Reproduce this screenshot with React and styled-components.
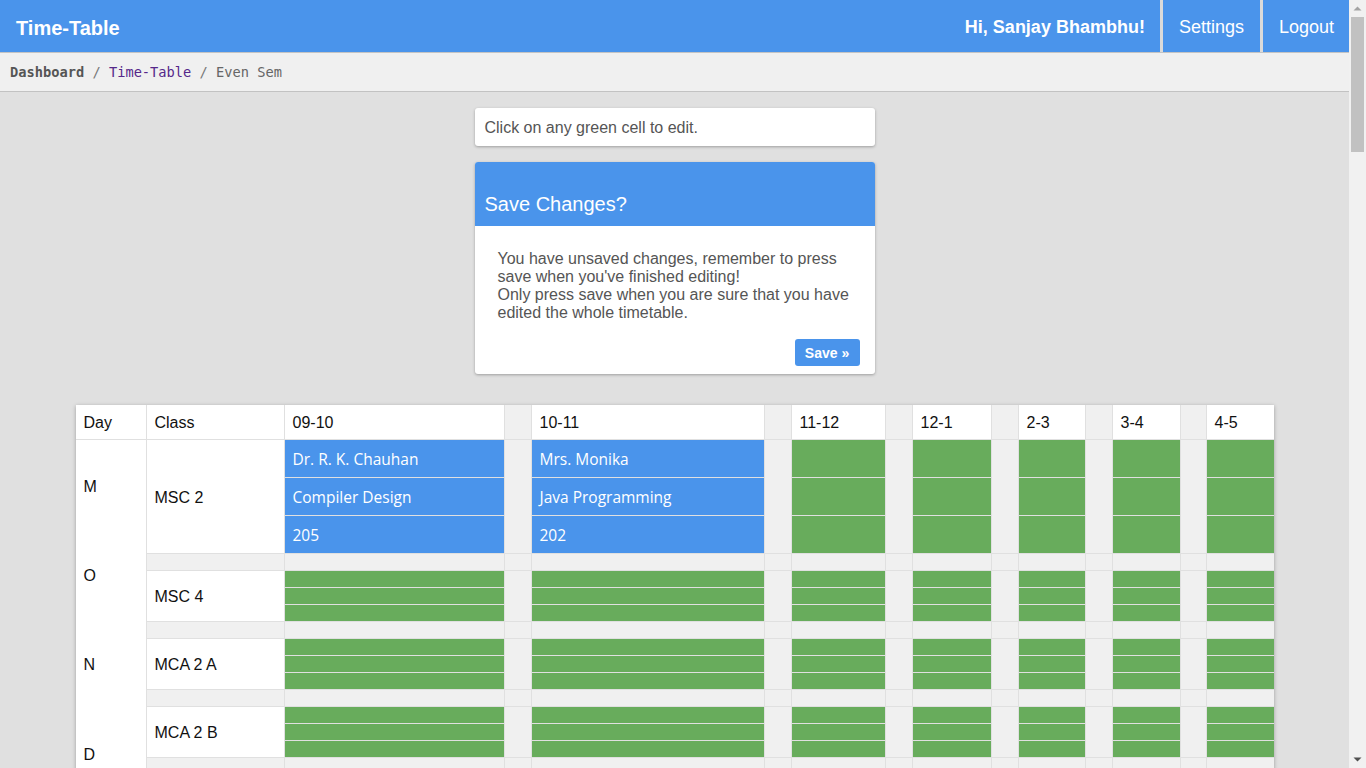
import React from 'react';
import styled, { createGlobalStyle } from 'styled-components';

const GlobalStyle = createGlobalStyle`
  * {
    box-sizing: border-box;
  }
  html {
    scrollbar-width: none;
  }
  body {
    margin: 0;
    background-color: #e0e0e0;
    font-family: 'Liberation Sans', Arial, sans-serif;
  }
  body::-webkit-scrollbar {
    display: none;
  }
`;

const BLUE = '#4a94eb';
const GREEN = '#68ac5c';
const LINE = '#e0e0e0';
const SOFT = '#f0f0f0';

const Page = styled.div`
  width: calc(100% - 17px);
`;

const ScrollTrack = styled.div`
  position: fixed;
  top: 0;
  right: 0;
  width: 17px;
  height: 100vh;
  background-color: #f1f1f1;
`;
const ScrollThumb = styled.div`
  position: absolute;
  top: 17px;
  left: 2px;
  width: 13px;
  height: 135px;
  background-color: #c1c1c1;
`;
const ScrollArrow = styled.svg`
  position: absolute;
  left: 4px;
  ${(props) => (props.$down ? 'bottom: 4px;' : 'top: 4px;')}
`;

const NavBar = styled.header`
  height: 53px;
  background-color: ${BLUE};
  border-bottom: 1px solid #c4c4c4;
  display: flex;
  align-items: stretch;
  justify-content: space-between;
  color: white;
`;
const Brand = styled.div`
  display: flex;
  align-items: center;
  padding: 4px 0 0 16px;
  font-size: 20px;
  font-weight: 700;
`;
const NavRight = styled.nav`
  display: flex;
  align-items: stretch;
`;
const NavItem = styled.div`
  display: flex;
  align-items: center;
  padding: 2px ${(props) => (props.$bold ? '15px' : '16px')} 0;
  font-size: 18px;
  font-weight: ${(props) => (props.$bold ? 700 : 400)};
  border-left: ${(props) => (props.$bordered ? '3px solid #dadada' : 'none')};
  cursor: pointer;
  &:last-child {
    padding-right: 15px;
  }
`;

const Breadcrumb = styled.div`
  height: 39px;
  background-color: ${SOFT};
  border-bottom: 1px solid #c2c2c2;
  display: flex;
  align-items: center;
  padding-left: 10px;
  font-family: 'DejaVu Sans Mono', 'Liberation Mono', monospace;
  font-size: 13.7px;
  color: #777;
  white-space: pre;
`;
const Crumb = styled.span`
  color: ${(props) =>
    props.$variant === 'home' ? '#555' : props.$variant === 'link' ? '#55288a' : '#666'};
  font-weight: ${(props) => (props.$variant === 'home' ? 700 : 400)};
`;

const Main = styled.main`
  display: flex;
  flex-direction: column;
  align-items: center;
  padding: 16px 0 40px;
`;

const Card = styled.div`
  width: 400px;
  background-color: white;
  border-radius: 3px;
  box-shadow: 0 1px 3px rgba(0, 0, 0, 0.3);
  overflow: hidden;
`;
const InfoCard = styled(Card)`
  height: 38px;
  display: flex;
  align-items: center;
  padding: 2px 0 0 10px;
  font-size: 16px;
  color: #555;
`;
const SaveCard = styled(Card)`
  margin-top: 16px;
`;
const SaveHeader = styled.div`
  height: 64px;
  background-color: ${BLUE};
  color: white;
  display: flex;
  align-items: flex-end;
  padding: 0 10px 10px;
  font-size: 20px;
  line-height: 24px;
`;
const SaveBody = styled.div`
  padding: 24px 23px 0;
  font-size: 16px;
  line-height: 18px;
  color: #555;
`;
const SaveFooter = styled.div`
  display: flex;
  justify-content: flex-end;
  padding: 17px 15px 8px;
`;
const SaveButton = styled.button`
  width: 65px;
  height: 27px;
  border: none;
  border-radius: 3px;
  background-color: ${BLUE};
  color: white;
  font-family: 'Liberation Sans', Arial, sans-serif;
  font-size: 14px;
  font-weight: 700;
  cursor: pointer;
`;

const Timetable = styled.div`
  margin-top: 31px;
  display: grid;
  grid-template-columns: 70px 137px 219px 26px 232px 26px 93px 26px 78px 26px 66px 26px 67px 25px 67px;
  gap: 1px;
  background-color: ${LINE};
  box-shadow: 0 1px 4px rgba(0, 0, 0, 0.3);
  font-size: 16px;
  color: #111;
`;
const HeadCell = styled.div`
  background-color: ${(props) => (props.$gap ? SOFT : 'white')};
  padding: 9px 8px 7px;
  line-height: 18px;
`;
const DayCell = styled.div`
  grid-row: span ${(props) => props.$span};
  background-color: white;
  display: flex;
  flex-direction: column;
  justify-content: space-around;
  padding: 2px 0 0 8px;
`;
const Letter = styled.span`
  line-height: 18px;
`;
const ClassCell = styled.div`
  background-color: white;
  display: flex;
  align-items: center;
  padding: 2px 8px 0;
`;
const SlotCell = styled.div`
  display: flex;
  flex-direction: column;
  gap: 1px;
  background-color: ${LINE};
`;
const SubCell = styled.div`
  flex: 1;
  background-color: ${(props) => (props.$filled ? BLUE : GREEN)};
  color: white;
  padding: 9px 8px 7px;
  font-family: 'Open Sans', 'Noto Sans', sans-serif;
  font-size: 15.5px;
  line-height: 21px;
  white-space: nowrap;
`;
const GapCell = styled.div`
  background-color: ${SOFT};
  min-height: 16px;
`;

const times = ['09-10', '10-11', '11-12', '12-1', '2-3', '3-4', '4-5'];
const classes = ['MSC 2', 'MSC 4', 'MCA 2 A', 'MCA 2 B', 'MCA 4 A', 'MCA 4 B', 'MCA 6'];
const days = ['MONDAY', 'TUESDAY', 'WEDNESDAY', 'THURSDAY', 'FRIDAY', 'SATURDAY'];

const lectures = {
  'MONDAY|MSC 2|09-10': ['Dr. R. K. Chauhan', 'Compiler Design', '205'],
  'MONDAY|MSC 2|10-11': ['Mrs. Monika', 'Java Programming', '202'],
};

function Slot({ entry }) {
  return (
    <SlotCell>
      {[0, 1, 2].map((i) => (
        <SubCell key={i} $filled={!!entry}>
          {entry ? entry[i] : null}
        </SubCell>
      ))}
    </SlotCell>
  );
}

function ClassRow({ day, name }) {
  const cells = [];
  times.forEach((t, idx) => {
    if (idx > 0) cells.push(<GapCell key={'g' + t} />);
    cells.push(<Slot key={t} entry={lectures[`${day}|${name}|${t}`]} />);
  });
  return (
    <>
      <ClassCell>{name}</ClassCell>
      {cells}
    </>
  );
}

function Separator() {
  return Array.from({ length: 14 }, (_, i) => <GapCell key={i} />);
}

function Scrollbar() {
  return (
    <ScrollTrack>
      <ScrollArrow width="9" height="9" viewBox="0 0 9 9">
        <path d="M0.5 6.5 L4.5 2.5 L8.5 6.5 Z" fill="#a3a3a3" />
      </ScrollArrow>
      <ScrollThumb />
      <ScrollArrow $down width="9" height="9" viewBox="0 0 9 9">
        <path d="M0.5 2.5 L4.5 6.5 L8.5 2.5 Z" fill="#505050" />
      </ScrollArrow>
    </ScrollTrack>
  );
}

export default function App() {
  return (
    <>
      <GlobalStyle />
      <Page>
        <NavBar>
          <Brand>Time-Table</Brand>
          <NavRight>
            <NavItem $bold>Hi, Sanjay Bhambhu!</NavItem>
            <NavItem $bordered>Settings</NavItem>
            <NavItem $bordered>Logout</NavItem>
          </NavRight>
        </NavBar>
        <Breadcrumb>
          <Crumb $variant="home">Dashboard</Crumb>
          {' / '}
          <Crumb $variant="link">Time-Table</Crumb>
          {' / '}
          <Crumb>Even Sem</Crumb>
        </Breadcrumb>
        <Main>
          <InfoCard>Click on any green cell to edit.</InfoCard>
          <SaveCard>
            <SaveHeader>Save Changes?</SaveHeader>
            <SaveBody>
              You have unsaved changes, remember to press save when you've finished editing!
              <br />
              Only press save when you are sure that you have edited the whole timetable.
            </SaveBody>
            <SaveFooter>
              <SaveButton>Save »</SaveButton>
            </SaveFooter>
          </SaveCard>
          <Timetable>
            <HeadCell>Day</HeadCell>
            <HeadCell>Class</HeadCell>
            {times.map((t, idx) => (
              <React.Fragment key={t}>
                {idx > 0 && <HeadCell $gap />}
                <HeadCell>{t}</HeadCell>
              </React.Fragment>
            ))}
            {days.map((day) => (
              <React.Fragment key={day}>
                <DayCell $span={classes.length * 2}>
                  {day.split('').map((ch, i) => (
                    <Letter key={i}>{ch}</Letter>
                  ))}
                </DayCell>
                {classes.map((name) => (
                  <React.Fragment key={name}>
                    <ClassRow day={day} name={name} />
                    <Separator />
                  </React.Fragment>
                ))}
              </React.Fragment>
            ))}
          </Timetable>
        </Main>
      </Page>
      <Scrollbar />
    </>
  );
}
